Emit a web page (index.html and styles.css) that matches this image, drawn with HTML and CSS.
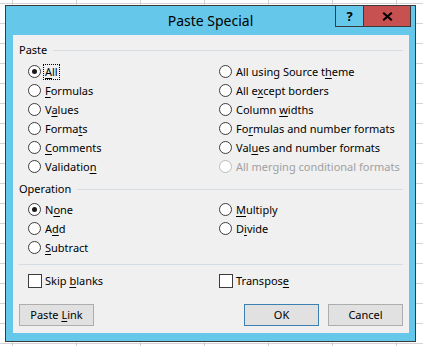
FILE: index.html
```html
<!DOCTYPE html>
<html lang="en">
<head>
<meta charset="utf-8">
<title>Paste Special</title>
<link rel="stylesheet" href="styles.css">
</head>
<body>
<div class="dialog">
  <div class="titlebar">
    <div class="title">Paste Special</div>
    <div class="winbtns">
      <div class="wbtn help">?</div>
      <div class="wbtn close">
        <svg width="11" height="9" viewBox="0 0 11 9"><path d="M1.2 0.8 L9.8 8.2 M9.8 0.8 L1.2 8.2" stroke="#000" stroke-width="2.1" fill="none"/></svg>
      </div>
    </div>
  </div>
  <div class="content">
    <div class="group-head"><span class="group-label">Paste</span><span class="group-line"></span></div>
    <div class="opts paste-opts">
      <div class="opt"><span class="radio checked"></span><span class="focus"><u>A</u>ll</span></div>
      <div class="opt"><span class="radio"></span><span>All using Source t<u>h</u>eme</span></div>
      <div class="opt"><span class="radio"></span><span><u>F</u>ormulas</span></div>
      <div class="opt"><span class="radio"></span><span>All e<u>x</u>cept borders</span></div>
      <div class="opt"><span class="radio"></span><span>V<u>a</u>lues</span></div>
      <div class="opt"><span class="radio"></span><span>Column <u>w</u>idths</span></div>
      <div class="opt"><span class="radio"></span><span>Forma<u>t</u>s</span></div>
      <div class="opt"><span class="radio"></span><span>Fo<u>r</u>mulas and number formats</span></div>
      <div class="opt"><span class="radio"></span><span><u>C</u>omments</span></div>
      <div class="opt"><span class="radio"></span><span>Val<u>u</u>es and number formats</span></div>
      <div class="opt"><span class="radio"></span><span>Validatio<u>n</u></span></div>
      <div class="opt disabled"><span class="radio"></span><span>All merging conditional formats</span></div>
    </div>
    <div class="group-head op-head"><span class="group-label">Operation</span><span class="group-line"></span></div>
    <div class="opts op-opts">
      <div class="opt"><span class="radio checked"></span><span>N<u>o</u>ne</span></div>
      <div class="opt"><span class="radio"></span><span><u>M</u>ultiply</span></div>
      <div class="opt"><span class="radio"></span><span>A<u>d</u>d</span></div>
      <div class="opt"><span class="radio"></span><span>D<u>i</u>vide</span></div>
      <div class="opt"><span class="radio"></span><span><u>S</u>ubtract</span></div>
    </div>
    <div class="separator"></div>
    <div class="opts checks">
      <div class="opt"><span class="check"></span><span>Skip <u>b</u>lanks</span></div>
      <div class="opt"><span class="check"></span><span>Transpos<u>e</u></span></div>
    </div>
    <div class="buttons">
      <div class="btn"><span>Paste <u>L</u>ink</span></div>
      <div class="btn default push"><span>OK</span></div>
      <div class="btn"><span>Cancel</span></div>
    </div>
  </div>
</div>
</body>
</html>
```
FILE: styles.css
```css
html, body {
  margin: 0;
  padding: 0;
}
body {
  width: 423px;
  height: 346px;
  overflow: hidden;
  background-color: #ffffff;
  background-image:
    linear-gradient(to right, #d4d4d4 1px, transparent 1px),
    linear-gradient(to bottom, #d4d4d4 1px, transparent 1px);
  background-size: 64px 20px;
  background-position: 12px 3px;
  font-family: "Noto Sans", "Open Sans", sans-serif;
  font-size: 11px;
  color: #000;
  padding-top: 5px;
  box-sizing: border-box;
}
.dialog {
  margin-left: 5px;
  width: 411px;
  height: 337px;
  box-sizing: border-box;
  border: 1px solid #3a3a3a;
  background: #65c7ea;
  display: flex;
  flex-direction: column;
}
.titlebar {
  height: 29px;
  display: grid;
  grid-template-columns: 1fr auto 1fr;
  align-items: center;
}
.title {
  grid-column: 2;
  font-size: 14px;
  line-height: 29px;
  color: #000;
}
.winbtns {
  grid-column: 3;
  justify-self: end;
  align-self: start;
  margin-top: -1px;
  margin-right: 4px;
  display: flex;
  border: 1px solid #3a3a3a;
  height: 22px;
  box-sizing: border-box;
}
.wbtn {
  height: 20px;
  display: flex;
  align-items: center;
  justify-content: center;
}
.help {
  width: 27px;
  border-right: 1px solid #3a3a3a;
  font-weight: bold;
  font-size: 13px;
  line-height: 20px;
}
.close {
  width: 46px;
  background: #c75050;
}
.close svg {
  display: block;
  margin-top: 1px;
}
.content {
  margin: 0 6px 0 7px;
  height: 298px;
  background: #f0f0f0;
  padding: 5px 6px 7px 6px;
  box-sizing: border-box;
  display: flex;
  flex-direction: column;
}
.group-head {
  height: 20px;
  display: flex;
  align-items: center;
  line-height: 20px;
}
.group-line {
  flex: 1;
  height: 1px;
  background: #d5dde3;
  margin-left: 6px;
  margin-top: 1px;
}
.op-head {
  margin-top: 3px;
}
.opts {
  display: grid;
  grid-template-columns: 191px 1fr;
  grid-auto-rows: 19px;
  padding-left: 9px;
}
.paste-opts {
  margin-top: 2px;
}
.op-opts {
  margin-top: 1px;
  grid-template-rows: repeat(3, 19px);
}
.opt {
  display: flex;
  align-items: center;
  white-space: nowrap;
  line-height: 19px;
}
.radio {
  width: 13px;
  height: 13px;
  box-sizing: border-box;
  border: 1px solid #3c3c3c;
  border-radius: 50%;
  background: #fff;
  margin-right: 4px;
  display: flex;
  align-items: center;
  justify-content: center;
  flex: none;
}
.radio.checked::after {
  content: "";
  width: 5px;
  height: 5px;
  border-radius: 50%;
  background: #1a1a1a;
}
.disabled {
  color: #a0a0a0;
}
.disabled .radio {
  border-color: #bcbcbc;
}
.focus {
  display: inline-block;
  line-height: 14px;
  border: 1px dotted #000;
  padding: 0 1px;
  margin-left: -2px;
}
u {
  text-underline-offset: 2px;
}
.separator {
  margin-top: 7px;
  height: 1px;
  background: #d5dde3;
}
.checks {
  margin-top: 6px;
}
.check {
  width: 14px;
  height: 14px;
  box-sizing: border-box;
  border: 1px solid #3c3c3c;
  background: #fff;
  margin-right: 3px;
  flex: none;
}
.buttons {
  margin-top: 14px;
  display: flex;
  gap: 9px;
}
.btn {
  width: 75px;
  height: 22px;
  box-sizing: border-box;
  border: 1px solid #adadad;
  background: #e1e1e1;
  display: flex;
  align-items: center;
  justify-content: center;
  line-height: 20px;
  white-space: nowrap;
}
.btn.default {
  border-color: #3c7fb1;
}
.push {
  margin-left: auto;
}
```
